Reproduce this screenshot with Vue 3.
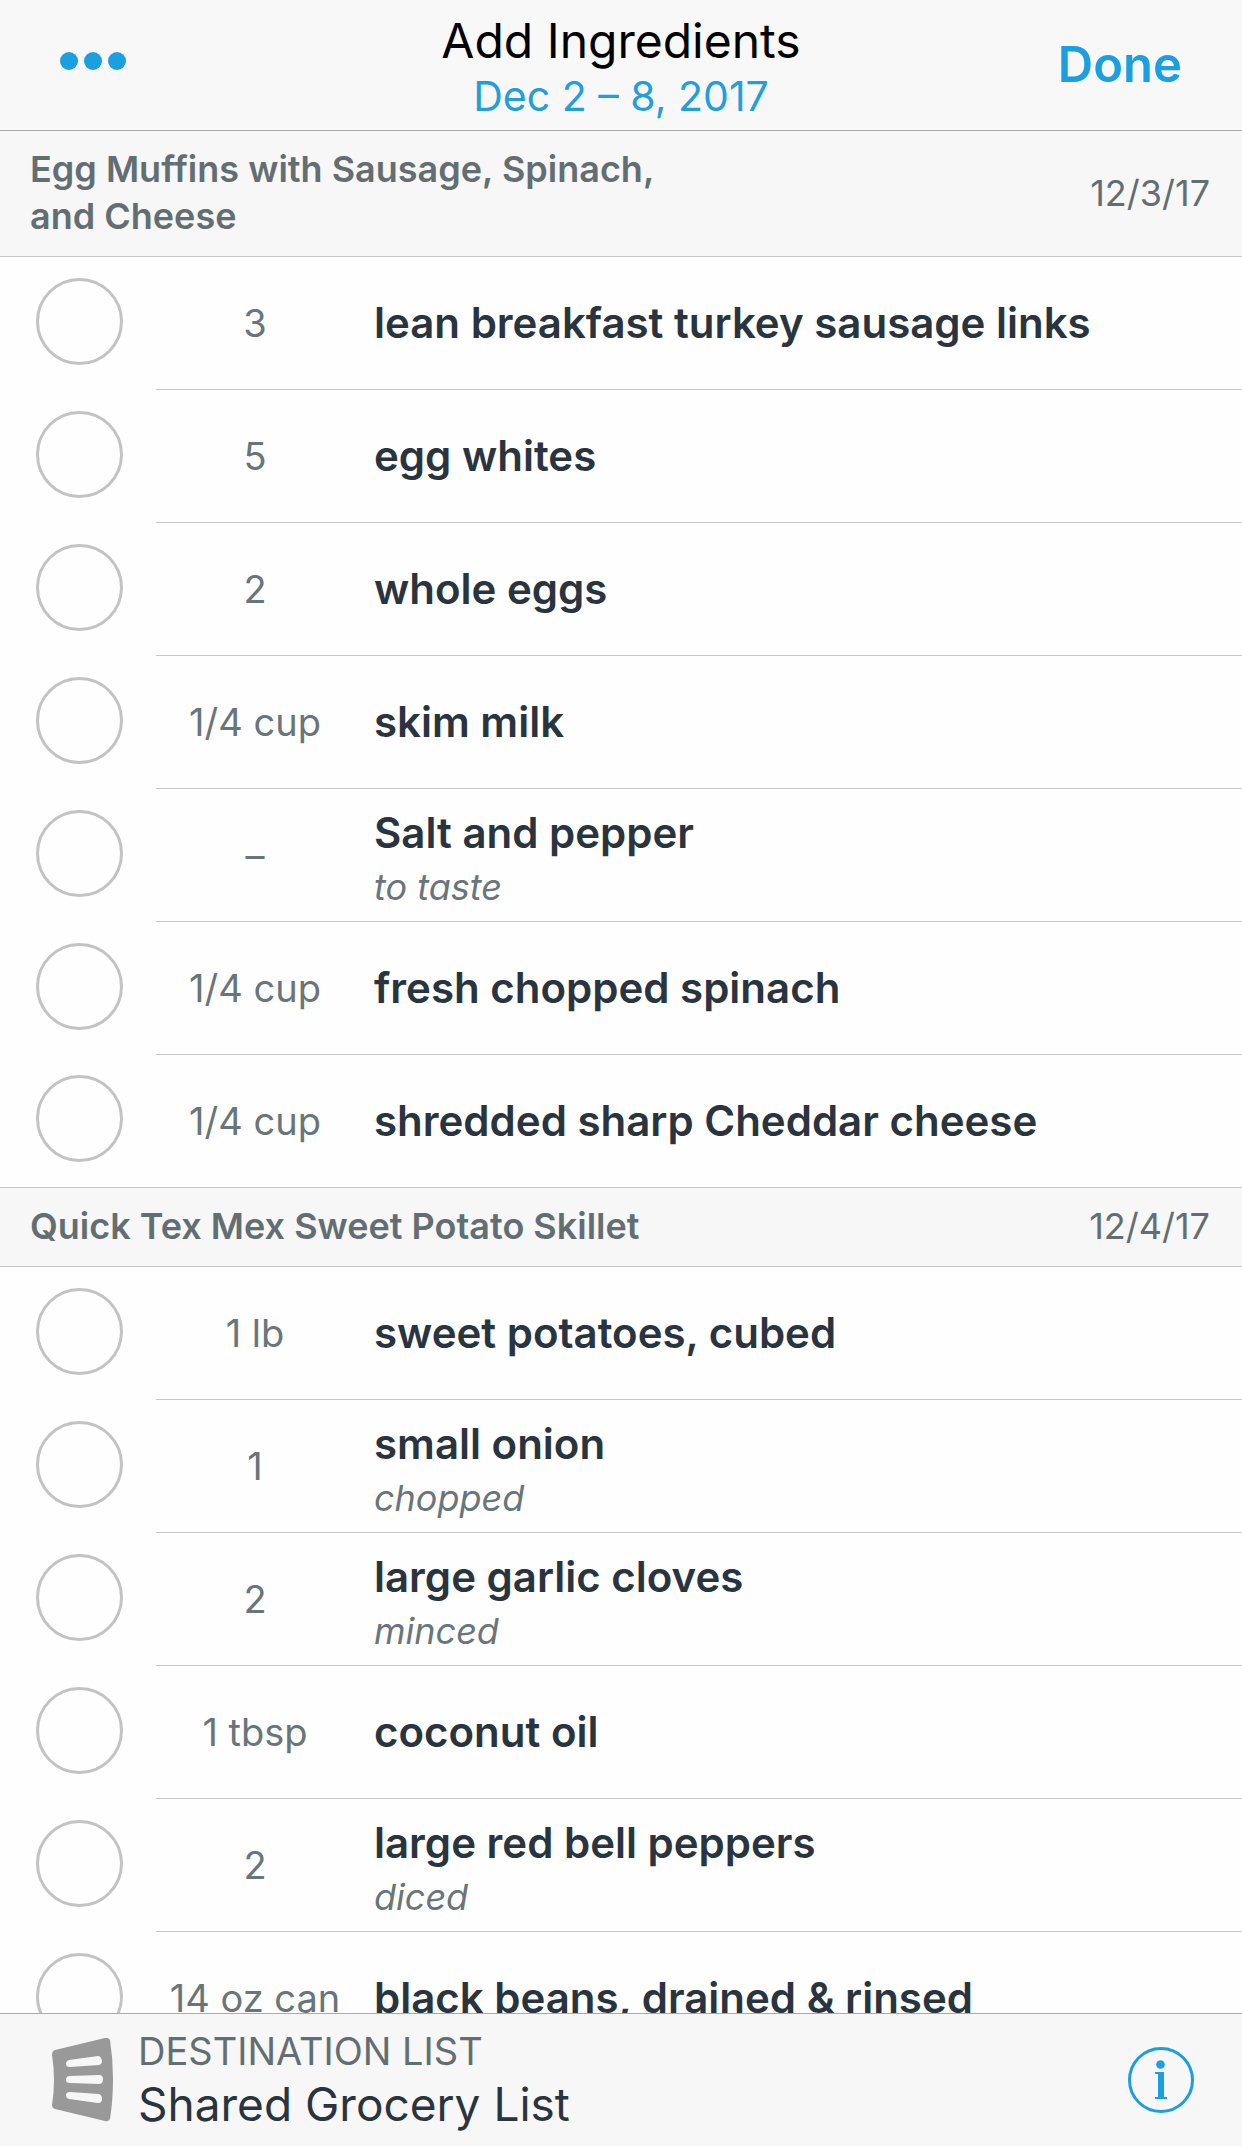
<script setup>
import { ref } from 'vue'

const sections = ref([
  {
    title: 'Egg Muffins with Sausage, Spinach, and Cheese',
    date: '12/3/17',
    items: [
      { qty: '3', name: 'lean breakfast turkey sausage links' },
      { qty: '5', name: 'egg whites' },
      { qty: '2', name: 'whole eggs' },
      { qty: '1/4 cup', name: 'skim milk' },
      { qty: '–', name: 'Salt and pepper', note: 'to taste' },
      { qty: '1/4 cup', name: 'fresh chopped spinach' },
      { qty: '1/4 cup', name: 'shredded sharp Cheddar cheese' },
    ],
  },
  {
    title: 'Quick Tex Mex Sweet Potato Skillet',
    date: '12/4/17',
    items: [
      { qty: '1 lb', name: 'sweet potatoes, cubed' },
      { qty: '1', name: 'small onion', note: 'chopped' },
      { qty: '2', name: 'large garlic cloves', note: 'minced' },
      { qty: '1 tbsp', name: 'coconut oil' },
      { qty: '2', name: 'large red bell peppers', note: 'diced' },
      { qty: '14 oz can', name: 'black beans, drained & rinsed' },
    ],
  },
])
const selected = ref([])
</script>

<template>
  <div class="screen">
    <header class="navbar">
      <div class="side">
        <button type="button" class="icon-button more" aria-label="More options">
          <svg width="66" height="18" viewBox="0 0 66 18" aria-hidden="true">
            <circle cx="9" cy="9" r="9" />
            <circle cx="33" cy="9" r="9" />
            <circle cx="57" cy="9" r="9" />
          </svg>
        </button>
      </div>
      <div class="heading">
        <h1>Add Ingredients</h1>
        <p>Dec 2 – 8, 2017</p>
      </div>
      <div class="side end">
        <button type="button" class="done">Done</button>
      </div>
    </header>

    <main class="content">
      <section v-for="(section, s) in sections" :key="section.title">
        <div class="section-head">
          <h2>{{ section.title }}</h2>
          <time>{{ section.date }}</time>
        </div>
        <ul>
          <li v-for="(item, i) in section.items" :key="item.name">
            <label class="row">
              <input v-model="selected" type="checkbox" :value="`${s}-${i}`" />
              <span class="details">
                <span class="qty">{{ item.qty }}</span>
                <span class="text" :class="{ 'with-note': item.note }">
                  <span class="name">{{ item.name }}</span>
                  <span v-if="item.note" class="note">{{ item.note }}</span>
                </span>
              </span>
            </label>
          </li>
        </ul>
      </section>
    </main>

    <footer class="toolbar">
      <button type="button" class="destination">
        <svg width="64" height="84" viewBox="0 0 64 84" aria-hidden="true">
          <path
            fill="#999"
            fill-rule="evenodd"
            d="M4 12 L54 0 Q57 -1 59 2 Q62 21 62 41 Q62 62 59 81 Q57 84 54 83 L4 71 Q1 70 1 67 Q5 42 1 17 Q1 13 4 12Z
               M18 22 Q15 23 15 26 Q15 29 19 29 L48 27 Q51 26 51 23 Q50 18 47 18Z
               M19 38 Q15 38 15 42 Q15 45 19 45 L48 46 Q52 46 52 41 Q52 37 48 37Z
               M19 54 Q15 54 15 57 Q15 60 18 61 L47 65 Q51 65 51 61 Q51 57 48 56Z"
          />
        </svg>
        <span class="destination-text">
          <span class="caption">DESTINATION LIST</span>
          <span class="list-name">Shared Grocery List</span>
        </span>
      </button>
      <button type="button" class="icon-button" aria-label="List info">
        <svg width="66" height="66" viewBox="0 0 66 66" aria-hidden="true">
          <circle cx="33" cy="33" r="31.5" fill="none" stroke="#1a9fdc" stroke-width="3" />
          <circle cx="32.5" cy="17.5" r="4.3" />
          <path d="M27 25h9v25h3v2H27v-2h3V27h-3z" />
        </svg>
      </button>
    </footer>
  </div>
</template>

<style>
body {
  margin: 0;
  background: #fff;
}
</style>

<style scoped>
.screen {
  display: flex;
  flex-direction: column;
  height: 100vh;
  overflow: hidden;
  font-family: Inter, 'Liberation Sans', sans-serif;
  color: #2a343f;
  background: #fefefe;
}

h1,
h2,
p,
ul {
  margin: 0;
  padding: 0;
  font-weight: 400;
  list-style: none;
}

button {
  padding: 0;
  border: 0;
  background: none;
  font-family: inherit;
  color: #1a9fe0;
  cursor: pointer;
}

.navbar {
  display: flex;
  flex-shrink: 0;
  align-items: center;
  padding: 12px 60px 10px;
  border-bottom: 1px solid #a9abac;
  background: #f8f8f8;
}

.side {
  display: flex;
  flex: 1;
}

.end {
  justify-content: flex-end;
}

.more {
  padding-bottom: 10px;
}

.icon-button svg {
  display: block;
  fill: #1a9fe0;
}

.heading {
  display: flex;
  flex-direction: column;
  gap: 2px;
  text-align: center;
}

h1 {
  color: #000;
  font-size: 48px;
  line-height: 58px;
}

.heading p {
  color: #229fd9;
  font-size: 41px;
  line-height: 48px;
}

.done {
  padding-bottom: 2px;
  font-size: 49px;
  font-weight: 600;
  line-height: 58px;
}

.content {
  flex: 1;
  min-height: 0;
  overflow: hidden;
}

.section-head {
  display: flex;
  align-items: center;
  justify-content: space-between;
  padding: 15px 32px 16px 30px;
  border-bottom: 1px solid #c4c6c8;
  background: #f7f7f7;
  color: #636e73;
  font-size: 36px;
  line-height: 47px;
}

h2 {
  max-width: 660px;
  font-size: 36px;
  font-weight: 600;
}

.row {
  display: flex;
  align-items: center;
  padding-left: 36px;
  cursor: pointer;
}

.row input {
  appearance: none;
  flex-shrink: 0;
  width: 87px;
  height: 87px;
  margin: 0 33px 5px 0;
  border: 3px solid #c3c3c3;
  border-radius: 50%;
}

.row input:checked {
  border-color: #1a9fe0;
  background: #1a9fe0;
}

.details {
  display: flex;
  flex: 1;
  align-items: center;
  box-sizing: border-box;
  min-height: 133px;
  border-bottom: 1px solid #c6c7c9;
}

section:not(:last-child) li:last-child .row {
  border-bottom: 1px solid #c4c6c8;
}

section:not(:last-child) li:last-child .details {
  min-height: 132px;
  border-bottom: 0;
}

.qty {
  width: 198px;
  margin-right: 20px;
  color: #69757a;
  font-size: 38px;
  line-height: 48px;
  text-align: center;
  white-space: nowrap;
}

.text {
  display: flex;
  flex: 1;
  flex-direction: column;
}

.with-note {
  gap: 1px;
  padding-top: 5px;
}

.name {
  font-size: 42px;
  font-weight: 600;
  line-height: 58px;
}

.note {
  color: #69757a;
  font-size: 36px;
  font-style: italic;
  line-height: 48px;
}

.toolbar {
  display: flex;
  flex-shrink: 0;
  align-items: center;
  justify-content: space-between;
  padding: 13px 48px 13px 51px;
  border-top: 1px solid #a9abac;
  background: #f7f7f7;
}

.destination {
  display: flex;
  align-items: center;
  gap: 23px;
  text-align: left;
}

.destination-text {
  display: flex;
  flex-direction: column;
}

.caption {
  color: #636e73;
  font-size: 38px;
  line-height: 48px;
}

.list-name {
  color: #2a343f;
  font-size: 46px;
  line-height: 58px;
}
</style>
